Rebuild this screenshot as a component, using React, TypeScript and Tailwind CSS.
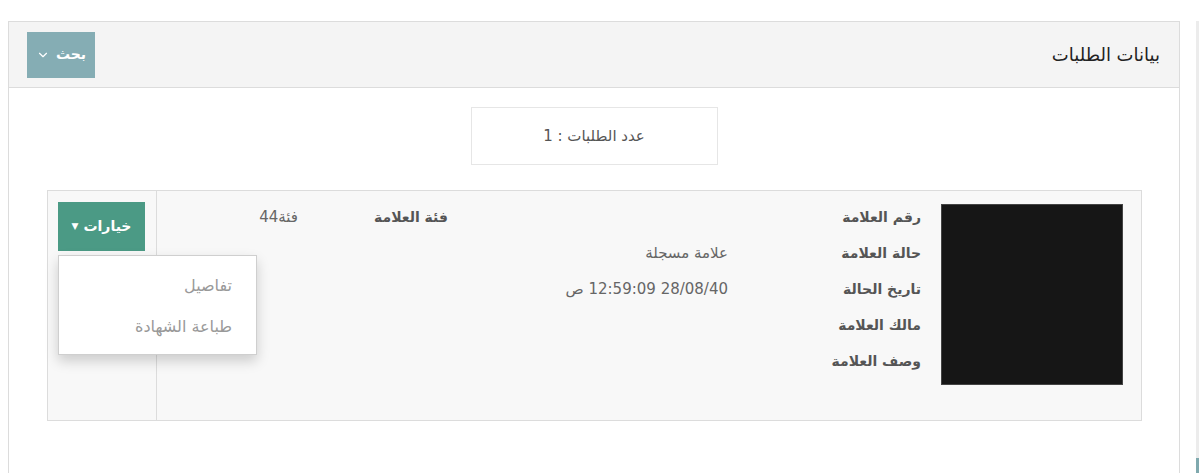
import { ChevronDown } from "lucide-react";

const font = { fontFamily: '"DejaVu Sans", "Noto Sans", sans-serif' };

export default function App() {
  return (
    <div
      dir="rtl"
      style={font}
      className="relative flex h-[473px] w-[1200px] overflow-hidden bg-white"
    >
      {/* right edge strip */}
      <div className="flex w-[5px] flex-col">
        <div className="flex-1 bg-white" />
        <div className="mr-[1px] h-[437px] w-[3px] bg-[#ececec]" />
        <div className="mr-[1px] h-[15px] w-[3px] bg-[#7fa9ae]" />
      </div>

      <div className="mr-[15px] mt-[21px] w-[1172px] border border-b-0 border-[#dcdcdc]">
        {/* Header */}
        <div className="flex h-[66px] items-center justify-between border-b border-[#dcdcdc] bg-[#f4f4f4] pl-[18px] pr-[19px]">
          <h2 className="text-[18px] text-[#222]">بيانات الطلبات</h2>
          <button className="flex h-[46px] w-[68px] items-center justify-center gap-[6px] bg-[#85adb4] text-[14px] font-bold text-white">
            <span>بحث</span>
            <ChevronDown className="size-[14px]" strokeWidth={2} />
          </button>
        </div>

        {/* Body */}
        <div className="pt-[19px]">
          <div className="mx-auto flex h-[58px] w-[247px] items-center justify-center border border-[#e6e6e6] text-[15px] text-[#555]">
            عدد الطلبات : 1
          </div>

          <div className="ml-[38px] mr-[37px] mt-[25px] flex h-[231px] border border-[#dcdcdc] bg-[#f8f8f8]">
            {/* Main content */}
            <div className="flex flex-1 items-start pr-[18px]">
              <div className="mt-[13px] h-[181px] w-[182px] border border-[#444] bg-[#161616]" />
              <div className="mr-[20px] mt-[8px] grid grid-cols-[193px_280px_150px] auto-rows-[36px] items-center text-[14px]">
                <span className="font-bold text-[#555]">رقم العلامة</span>
                <span />
                <span className="font-bold text-[#555]">فئة العلامة</span>
                <span className="text-[15px] text-[#666]">فئة44</span>

                <span className="font-bold text-[#555]">حالة العلامة</span>
                <span className="col-span-3 text-[15px] text-[#666]">علامة مسجلة</span>

                <span className="font-bold text-[#555]">تاريخ الحالة</span>
                <span className="col-span-3 text-[15px] text-[#666]">28/08/40 12:59:09 ص</span>

                <span className="col-span-4 font-bold text-[#555]">مالك العلامة</span>
                <span className="col-span-4 font-bold text-[#555]">وصف العلامة</span>
              </div>
            </div>

            {/* Options column */}
            <div className="relative w-[109px] border-r border-[#dcdcdc] pl-[10px] pt-[11px]">
              <button className="mr-auto flex h-[49px] w-[87px] items-center justify-center gap-[5px] bg-[#4b9a85] text-[14px] font-bold text-white">
                <span>خيارات</span>
                <span className="text-[9px]">▼</span>
              </button>
              <div className="absolute left-[10px] top-[64px] z-10 w-[199px] border border-[#cfcfcf] bg-white pb-[7px] pt-[9px] shadow-[0_6px_12px_rgba(0,0,0,0.18)]">
                <div className="flex h-[41px] items-center pr-[24px] text-[16px] text-[#999]">
                  تفاصيل
                </div>
                <div className="flex h-[41px] items-center pr-[24px] text-[16px] text-[#999]">
                  طباعة الشهادة
                </div>
              </div>
            </div>
          </div>
        </div>
      </div>
    </div>
  );
}
